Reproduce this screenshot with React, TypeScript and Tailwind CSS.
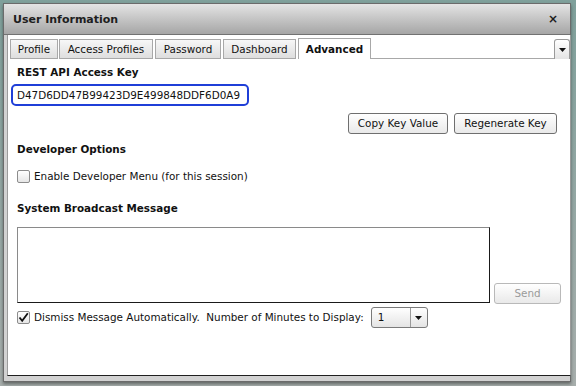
import React from "react";

const font = { fontFamily: '"DejaVu Sans", Verdana, sans-serif' };

function Check({ checked }: { checked?: boolean }) {
  return (
    <div className="w-[13px] h-[13px] border border-[#8c8c8c] rounded-[2px] bg-gradient-to-b from-[#ffffff] to-[#e6e6e6] flex items-center justify-center shrink-0">
      {checked && (
        <svg width="11" height="11" viewBox="0 0 11 11">
          <path d="M1.5 5.5 L4.2 8.8 L9.8 1.2" stroke="#111" strokeWidth="1.8" fill="none" />
        </svg>
      )}
    </div>
  );
}

function Btn({ w, children, disabled }: { w: string; children: React.ReactNode; disabled?: boolean }) {
  return (
    <div
      className={
        "h-[21px] flex items-center justify-center rounded-[3px] border bg-gradient-to-b from-[#ffffff] to-[#e9e9e9] " +
        w +
        (disabled ? " border-[#b9b9b9] text-[#9a9a9a]" : " border-[#6f6f6f] text-[#111]")
      }
    >
      {children}
    </div>
  );
}

export default function App() {
  const tabs = [
    { label: "Profile", w: "w-[48px] mr-[1px]" },
    { label: "Access Profiles", w: "w-[94px] mr-[2px]" },
    { label: "Password", w: "w-[66px] mr-[2px]" },
    { label: "Dashboard", w: "w-[73px] mr-[2px]" },
  ];
  return (
    <div className="w-[576px] h-[386px] bg-gradient-to-b from-[#7fa09b] to-[#a7aeac] pt-[3px] pl-[3px] text-[10.4px] leading-[13px] text-[#111]" style={font}>
      <div className="w-[568px] h-[379px] border border-[#6b6b6b] bg-[#d2d2d2] flex flex-col shadow-[0_2px_3px_rgba(0,0,0,0.4)]">
        {/* title bar */}
        <div className="h-[31px] shrink-0 bg-gradient-to-b from-[#e4e4e4] to-[#a6a6a6] border-b border-[#727272] flex items-center justify-between pl-[9px] pr-[12px]">
          <span className="font-bold text-[11px] text-[#1e1e1e]">User Information</span>
          <span className="font-bold text-[12px] text-[#1e1e1e]">×</span>
        </div>
        {/* frame */}
        <div className="flex-1 px-[3px] pb-[5px] flex">
          <div className="flex-1 bg-white border-l border-r border-[#9b9b9b] border-b border-b-[#1f1f1f] flex flex-col">
            {/* tabs */}
            <div className="flex items-end h-[24px] pl-[2px]">
              {tabs.map((t) => (
                <div
                  key={t.label}
                  className={
                    "h-[20px] border border-[#a8a8a8] bg-gradient-to-b from-[#f7f7f7] to-[#dedede] flex items-center justify-center " +
                    t.w
                  }
                >
                  {t.label}
                </div>
              ))}
              <div className="h-[21px] w-[73px] border border-b-0 border-[#a8a8a8] bg-white flex items-center justify-center font-bold">
                Advanced
              </div>
              <div className="flex-1 h-[20px] border-b border-[#a8a8a8] flex justify-end">
                <div className="w-[16px] h-[20px] border border-b-0 border-[#9a9a9a] rounded-t-[3px] bg-gradient-to-b from-[#ffffff] to-[#e4e4e4] flex items-center justify-center">
                  <svg width="7" height="4" viewBox="0 0 7 4">
                    <path d="M0 0 L7 0 L3.5 4 Z" fill="#111" />
                  </svg>
                </div>
              </div>
            </div>
            {/* content */}
            <div className="flex flex-col pl-[9px] pr-[9px]">
              <div className="mt-[7px] font-bold">REST API Access Key</div>
              <div className="mt-[5px] -ml-[6px] w-[238px] h-[22px] border-2 border-[#1f3fd8] rounded-[5px] flex items-center pl-[4px] text-[#111]">
                D47D6DD47B99423D9E499848DDF6D0A9
              </div>
              <div className="mt-[7px] mr-[4px] flex justify-end gap-[6px]">
                <Btn w="w-[100px]">Copy Key Value</Btn>
                <Btn w="w-[103px]">Regenerate Key</Btn>
              </div>
              <div className="mt-[9px] font-bold">Developer Options</div>
              <div className="mt-[14px] flex items-center gap-[4px]">
                <Check />
                <span>Enable Developer Menu (for this session)</span>
              </div>
              <div className="mt-[19px] font-bold">System Broadcast Message</div>
              <div className="mt-[12px] flex items-end">
                <div className="w-[473px] h-[76px] border border-[#8a8a8a] border-r-[#1a1a1a] border-b-[#1a1a1a] bg-white" />
                <div className="ml-[4px] -mb-[1px]">
                  <Btn w="w-[67px]" disabled>
                    Send
                  </Btn>
                </div>
              </div>
              <div className="mt-[4px] flex items-center">
                <Check checked />
                <span className="ml-[4px] whitespace-pre">Dismiss Message Automatically.  Number of Minutes to Display:</span>
                <div className="ml-[7px] w-[57px] h-[21px] border border-[#7a7a7a] rounded-[3px] bg-gradient-to-b from-[#ffffff] to-[#e4e4e4] flex">
                  <div className="flex-1 pl-[6px] flex items-center">1</div>
                  <div className="w-[17px] border-l border-[#9a9a9a] flex items-center justify-center">
                    <svg width="7" height="4" viewBox="0 0 7 4">
                      <path d="M0 0 L7 0 L3.5 4 Z" fill="#111" />
                    </svg>
                  </div>
                </div>
              </div>
            </div>
          </div>
        </div>
      </div>
    </div>
  );
}
